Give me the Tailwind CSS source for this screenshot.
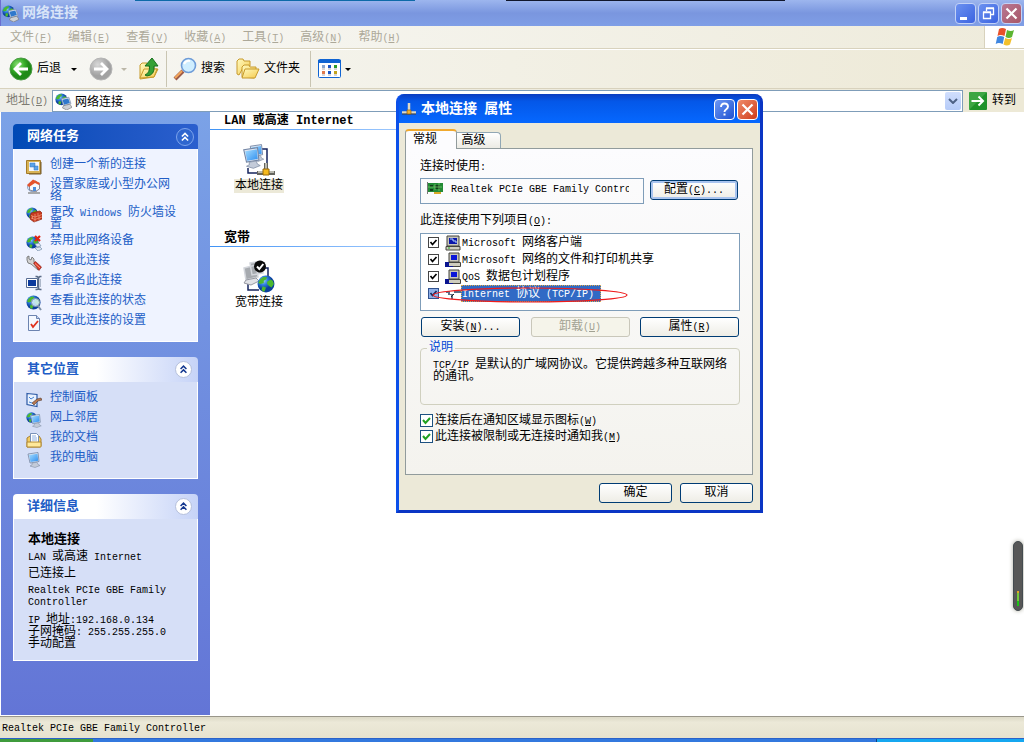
<!DOCTYPE html>
<html lang="zh-CN">
<head>
<meta charset="utf-8">
<title>网络连接</title>
<script src="https://cdn.jsdelivr.net/npm/@tailwindcss/browser@4"></script>
</head>
<body class="relative flex h-screen flex-col overflow-hidden bg-white font-['Liberation_Mono','Noto_Sans_CJK_SC',monospace] text-xs leading-3 text-black [&_span]:leading-none">

<svg class="absolute size-0" aria-hidden="true">
  <defs>
    <radialGradient id="gGlobe" cx="35%" cy="30%"><stop offset="0" stop-color="#9fd0ff"/><stop offset=".5" stop-color="#2f7fe0"/><stop offset="1" stop-color="#0a3f9c"/></radialGradient>
    <radialGradient id="gBack" cx="35%" cy="30%"><stop offset="0" stop-color="#8fe07a"/><stop offset=".6" stop-color="#3bb02c"/><stop offset="1" stop-color="#1f8a18"/></radialGradient>
    <radialGradient id="gFwd" cx="35%" cy="30%"><stop offset="0" stop-color="#d8d8d8"/><stop offset="1" stop-color="#a2a2a2"/></radialGradient>
    <linearGradient id="gFolder" x2="1" y2="1"><stop offset="0" stop-color="#fffbc0"/><stop offset="1" stop-color="#f5c94c"/></linearGradient>
    <linearGradient id="gScreen" x2="1" y2="1"><stop offset="0" stop-color="#a4dcff"/><stop offset="1" stop-color="#2f8ff0"/></linearGradient>
  </defs>
  <symbol id="globe" viewBox="0 0 16 16">
    <circle cx="8" cy="8" r="7.500" fill="url(#gGlobe)"/>
    <path d="M3 3.500l3-2 3 .5-1 2-2 1v2l-3 1-2-1zM9 6l3-2 2 1 1 3-2 3-2-1-2-2zM5 10l3 1-1 3-1 1-2-2z" fill="#4cb82e"/>
  </symbol>
  <symbol id="monitor" viewBox="0 0 16 16">
    <path d="M2 2l10-1.500 1 9L4 11z" fill="#dfe6f2" stroke="#7386a5" stroke-width=".8"/>
    <path d="M3 3l8.500-1.300 .7 7L4.500 10z" fill="url(#gScreen)"/>
    <path d="M6 11l5-.8 1 2.300 2 1-5 2-5-1.500 2-1z" fill="#c3cbd9" stroke="#8390a6" stroke-width=".6"/>
  </symbol>
  <symbol id="netconn" viewBox="0 0 16 16">
    <use href="#globe" width="12" height="12"/>
    <path d="M6 5.500l7-1.500 2 6-7 2z" fill="#e1e8f3" stroke="#8090ab" stroke-width=".7"/>
    <path d="M7 6.300l5.500-1.200 1.500 4.400-5.500 1.500z" fill="#2f78cc"/>
    <path d="M8 12l6-1.500 2 3-5 2.500-4-2z" fill="#ccd0d6" stroke="#777" stroke-width=".6"/>
  </symbol>
  <symbol id="wizard" viewBox="0 0 16 16">
    <path d="M.5 1.500h14v13H.5z" fill="#d8b356" stroke="#a47a28"/><path d="M3 3h10v9H3z" fill="#f4f7ff"/>
    <path d="M4 4h5v4H4zM8 7h4v4H8z" fill="#5aa3ea" stroke="#3674bd" stroke-width=".5"/><path d="M15 3v12H3" fill="none" stroke="#775c2a"/>
  </symbol>
  <symbol id="home" viewBox="0 0 16 16">
    <path d="M5 11h6v2h3v2H2v-2h3z" fill="#a7a9ac"/><circle cx="6" cy="8" r="4.500" fill="#d9e8fb" stroke="#90a8ca"/>
    <path d="M3.500 5.500v5.500l6 1.500 4-2.500V5l-4-3z" fill="#f7f8fc" stroke="#889"/>
    <path d="M1 6L7 .5 14 4l-1 2-4-2-6 4z" fill="#e4522d"/><path d="M7 8h3v4H7z" fill="#4c8cdb"/>
  </symbol>
  <symbol id="firewall" viewBox="0 0 16 16">
    <use href="#globe" width="12" height="12"/>
    <path d="M5 6l9-2 2 2v6l-8 3-4-3z" fill="#c83a1f" stroke="#8e2412" stroke-width=".7"/>
    <path d="M5 8.500l4 1.500 7-2.500M5 11l4 1.500 7-2.500M9 7v8M12 6v2.500M13 9v4M6.500 9v3" stroke="#f2a183" stroke-width=".7" fill="none"/>
  </symbol>
  <symbol id="disable" viewBox="0 0 16 16">
    <use href="#globe" width="13" height="13" y="1"/><path d="M9 9l4-1 2 3-4 1zM9 13l5-1 2 2-4 2z" fill="#dce6f3" stroke="#7890ac" stroke-width=".7"/>
    <path d="M9 1l5 5M14 1L9 6" stroke="#df2413" stroke-width="2.200"/>
  </symbol>
  <symbol id="repair" viewBox="0 0 16 16">
    <path d="M1 2l2-1v3l2 1 1-3 2 2v3l6 5-2 3-7-6-3-1-1-3z" fill="#d3d3d3" stroke="#686868" stroke-width=".8"/>
    <path d="M7.500 8l2-1.500 6 5.500-2.500 3.500z" fill="#dd3826" stroke="#7b1b13" stroke-width=".6"/><path d="M9 8.500l5 4.500" stroke="#ff9a83"/>
  </symbol>
  <symbol id="rename" viewBox="0 0 16 16">
    <path d="M.5 3.500h11v9H.5z" fill="#fff" stroke="#566b92"/><path d="M2 5h8v6H2z" fill="#0c3a9d"/>
    <path d="M9.500 1.500h1.500l1.500 1 1.500-1H15.500M9.500 14.500h1.500l1.500-1 1.500 1h1.500M12.500 2.500v11" fill="none" stroke="#5b6c87" stroke-width="1.600"/><path d="M14.500 4v8" stroke="#aeb9cb"/>
  </symbol>
  <symbol id="status" viewBox="0 0 16 16">
    <use href="#globe" width="15" height="15"/><circle cx="9.500" cy="7.500" r="4" fill="#d7f0ff" fill-opacity=".85" stroke="#8393a8"/>
    <path d="M12 11l3 4" stroke="#7e91a8" stroke-width="2"/>
  </symbol>
  <symbol id="settings" viewBox="0 0 16 16">
    <path d="M2.500.5h8l3 3v12h-11z" fill="#f4f8ff" stroke="#6c83b0"/><path d="M10.500.5v3h3" fill="#c4d3ef" stroke="#6c83b0"/>
    <path d="M5 9l2 3 5-6" fill="none" stroke="#e0321e" stroke-width="1.800"/>
  </symbol>
  <symbol id="control" viewBox="0 0 16 16">
    <path d="M1 1.500l10 1v12l-10-2z" fill="#e9f2ff" stroke="#2c59a5" stroke-width="1.200"/><path d="M3 5l2 2 3-2M3 10l3 1" stroke="#4482d2" fill="none"/>
    <path d="M6 11l5-4 4-1 1 2-4 1-4 4z" fill="#b87851" stroke="#51392e" stroke-width=".6"/>
  </symbol>
  <symbol id="places" viewBox="0 0 16 16"><use href="#globe" width="11" height="11"/><use href="#monitor" x="3" y="2" width="14" height="14"/></symbol>
  <symbol id="docs" viewBox="0 0 16 16">
    <path d="M1 6l3-2h9l2 3v7l-1 1H1z" fill="#f3cd62" stroke="#a9802f"/><path d="M4.500 1.500h6l2 2v7h-8z" fill="#fff" stroke="#7991b8"/>
    <path d="M6 4h4M6 6h5M6 8h5" stroke="#8eb0e3"/><path d="M1 10h14v5H1z" fill="#ffe99a" stroke="#b18933"/>
  </symbol>
  <symbol id="lan" viewBox="0 0 34 34">
    <path d="M20 6h5v15M6 25v5h11" fill="none" stroke="#16245e" stroke-width="1.500"/>
    <use href="#monitor" x="6" y="0" width="18" height="20"/><use href="#monitor" x="-1" y="4" width="22" height="22"/>
    <path d="M24 20v8M15 30h18" stroke="#65655e" stroke-width="4"/><path d="M24 20v8M16 29h16" stroke="#d5d5cb" stroke-width="1.500"/>
    <path d="M21 26h6v6h-6z" fill="#f5b91e" stroke="#98690a"/>
  </symbol>
  <symbol id="wan" viewBox="0 0 34 34">
    <path d="M23 8h3v10M6 24v6h11" fill="none" stroke="#16245e" stroke-width="1.500"/>
    <path d="M8 3l11-2 2 12-11 2zM2 8l12-3 2 12-12 3z" fill="#a6aaaf" stroke="#d3d6dc" stroke-width="1.500"/><path d="M4 20l10-2 3 3-8 4-7-2z" fill="#e1e2e6" stroke="#9799a2"/>
    <use href="#globe" x="15" y="15" width="18" height="18"/>
    <circle cx="18" cy="6.500" r="6" fill="#0a0a0a"/><path d="M15 6.500l2.300 2.500 4-5" fill="none" stroke="#fff" stroke-width="2"/>
  </symbol>
  <symbol id="plug" viewBox="0 0 16 16">
    <path d="M8 2v7M1 11.500h14" stroke="#ddd8c4" stroke-width="2.500"/><path d="M1 13h14" stroke="#433f36"/><path d="M6 9h4v4H6z" fill="#f8b32d" stroke="#875b16" stroke-width=".7"/>
  </symbol>
  <symbol id="pc" viewBox="0 0 16 16">
    <path d="M2 1h12v10H2z" fill="#c9c7bb" stroke="#44443e"/><path d="M4 3h8v6H4z" fill="#0b16aa"/><path d="M5 4h3v2h3v2" fill="none" stroke="#b5d4ff"/>
    <path d="M1 11.500h14v3.500H1z" fill="#cfcdbf" stroke="#44443e"/><path d="M3 13h2" stroke="#2a2"/>
  </symbol>
  <symbol id="pcshare" viewBox="0 0 16 16">
    <path d="M4 1h10v9H4z" fill="#c9c7bb" stroke="#44443e"/><path d="M6 3h6v5H6z" fill="#0b16d8"/><path d="M3.500 10.500h12v4h-12z" fill="#cfcdbf" stroke="#44443e"/>
    <path d="M0 10h4v5H0z" fill="#0a1490"/><path d="M4 14.500h4" stroke="#0a1490"/>
  </symbol>
  <symbol id="proto" viewBox="0 0 16 16"><path d="M1 5h4v3h3v5H6V9H3V7H1zM9 5h7v2H9z" fill="#5d6f87"/><path d="M6 11l3-3" stroke="#222"/></symbol>
  <symbol id="chev" viewBox="0 0 18 18"><path d="M5.500 8.500L9 5l3.500 3.500M5.500 13L9 9.500l3.500 3.500" fill="none" stroke="currentColor" stroke-width="1.800"/></symbol>
</svg>

<!-- Window title bar -->
<header class="flex h-[26px] shrink-0 items-center border-l border-[#6a6fd0] bg-linear-to-b from-[#9db6ee] via-[#7a96df] to-[#7f9ee6] pl-px pr-0.5">
  <svg class="size-[17px]"><use href="#netconn"/></svg>
  <h1 class="ml-[3px] flex-1 text-sm font-bold leading-4 text-[#d8e4f8]">网络连接</h1>
  <div class="flex gap-0.5">
    <button aria-label="最小化" class="grid size-[21px] place-items-center rounded-sm border border-[#c3d2f7] bg-linear-to-br from-[#6c91f0] to-[#3c62e0]"><svg class="size-[19px]" viewBox="0 0 19 19"><path d="M4 13h7v3H4z" fill="#fff"/></svg></button>
    <button aria-label="还原" class="grid size-[21px] place-items-center rounded-sm border border-[#c3d2f7] bg-linear-to-br from-[#6c91f0] to-[#3c62e0]"><svg class="size-[19px]" viewBox="0 0 19 19" fill="none" stroke="#fff"><path d="M4.500 8.500h7v6h-7zM4 8h8M7.500 7V4.500h7v6H12M7 4h8" stroke-width="1.300"/></svg></button>
    <button aria-label="关闭" class="grid size-[21px] place-items-center rounded-sm border border-[#c3d2f7] bg-linear-to-br from-[#b87894] to-[#a85668]"><svg class="size-[19px]" viewBox="0 0 19 19"><path d="M4.500 4.500l10 10M14.500 4.500l-10 10" stroke="#fff" stroke-width="2.200"/></svg></button>
  </div>
</header>
<div class="absolute left-[135px] top-0 h-px w-[280px] bg-[#0d6aa8]"></div>
<div class="absolute left-[506px] top-0 h-px w-[279px] bg-[#10162c]"></div>

<!-- Menu bar -->
<nav class="flex h-[23px] shrink-0 border-b border-[#d8d2bd] bg-linear-to-r from-[#f8f8f6] to-[#eeebdb]">
  <div class="flex flex-1 items-center gap-4 pl-2.5 pt-0.5 text-[#aca899]">
    <button>文件<span class="text-[10px]">(<u>F</u>)</span></button>
    <button>编辑<span class="text-[10px]">(<u>E</u>)</span></button>
    <button>查看<span class="text-[10px]">(<u>V</u>)</span></button>
    <button>收藏<span class="text-[10px]">(<u>A</u>)</span></button>
    <button>工具<span class="text-[10px]">(<u>T</u>)</span></button>
    <button>高级<span class="text-[10px]">(<u>N</u>)</span></button>
    <button>帮助<span class="text-[10px]">(<u>H</u>)</span></button>
  </div>
  <div class="grid w-10 place-items-center border-l border-[#d8d2bd] bg-white">
    <svg class="size-5" viewBox="0 0 20 20"><path d="M4 2q3-2 7 0l-1.500 7q-4-2-7 0z" fill="#e8512a"/><path d="M12 3q4 2 7 0l-2 7q-3 2-6.500 0z" fill="#5cb531"/><path d="M2.200 10q3-2 7 0l-1.500 7q-4-2-7 0z" fill="#3f86e0"/><path d="M10.200 11q4 2 6.800 0l-2 6.500q-3 2-6.500 0z" fill="#f3c02c"/></svg>
  </div>
</nav>

<!-- Toolbar -->
<div class="flex h-[40px] shrink-0 items-center border-b border-[#d8d2bd] border-t border-t-white bg-linear-to-r from-[#f7f7f4] to-[#ede9d6] pl-[9px]">
  <button class="flex items-center gap-1"><svg class="size-6" viewBox="0 0 24 24"><circle cx="12" cy="12" r="11" fill="url(#gBack)" stroke="#4b9a45"/><path d="M19 12H7M12 6l-6 6 6 6" fill="none" stroke="#fff" stroke-width="2.800"/></svg>后退</button>
  <button aria-label="后退列表" class="ml-2.5 w-1.5"><svg class="h-[3px] w-1.5" viewBox="0 0 6 3"><path d="M0 0h6L3 3z"/></svg></button>
  <button aria-label="前进" class="ml-3"><svg class="size-6" viewBox="0 0 24 24"><circle cx="12" cy="12" r="11" fill="url(#gFwd)" stroke="#b5b5b5"/><path d="M5 12h12M12 6l6 6-6 6" fill="none" stroke="#fff" stroke-width="2.800"/></svg></button>
  <button aria-label="前进列表" class="ml-2 w-1.5"><svg class="h-[3px] w-1.5" viewBox="0 0 6 3"><path d="M0 0h6L3 3z" fill="#bbb7a8"/></svg></button>
  <button aria-label="向上" class="ml-3"><svg class="h-6 w-5" viewBox="0 0 20 24"><path d="M1 8l2-2h5l1 3h6v3h4l-4 8-14 2z" fill="url(#gFolder)" stroke="#c79a2c"/><path d="M1 21l4-9h13l-3 8z" fill="url(#gFolder)" stroke="#c79a2c"/><path d="M6 18q5-2 4.500-9H6l7-8 6 8h-4q1 9-7 10z" fill="#36a136" stroke="#17701d"/></svg></button>
  <div class="ml-[7px] h-9 w-px bg-[#c9c5b2]"></div>
  <button class="ml-1.5 flex items-center gap-1"><svg class="size-6" viewBox="0 0 24 24"><path d="M2 22l8-8" stroke="#9b5a4a" stroke-width="4"/><path d="M2 21l7-7" stroke="#f3a65b" stroke-width="2"/><circle cx="15.500" cy="8.500" r="7" fill="#cfeeff" stroke="#6e9cd8" stroke-width="1.600"/><path d="M11 7q2-4 6-3" stroke="#fff" stroke-width="2" fill="none"/></svg>搜索</button>
  <button class="ml-[11px] flex items-center gap-1"><svg class="size-6" viewBox="0 0 24 24"><path d="M1 4l2-2h4l1 2h6v5H8l-5 9-2-1z" fill="url(#gFolder)" stroke="#c79a2c"/><path d="M6 10l2-2h5l1 2h6v3l-2 8-12-1z" fill="url(#gFolder)" stroke="#c79a2c"/><path d="M6 21l3-9h14l-4 9z" fill="url(#gFolder)" stroke="#c79a2c"/></svg>文件夹</button>
  <div class="ml-2.5 h-9 w-px bg-[#c9c5b2]"></div>
  <button aria-label="查看" class="ml-[7px] flex items-center gap-[3px]"><svg class="h-5 w-6" viewBox="0 0 24 20"><rect x=".5" y=".5" width="22" height="18" rx="1" fill="#fff" stroke="#1064d2"/><path d="M0 1h23v3H0z" fill="#1064d2"/><path d="M4 6h3v3H4z" fill="#89a6cf"/><path d="M10 6h3v3h-3z" fill="#1d56c3"/><path d="M16 6h3v3h-3z" fill="#2b9b2b"/><path d="M4 12h3v3H4z" fill="#e07a4b"/><path d="M10 12h3v3h-3z" fill="#1d56c3"/><path d="M16 12h3v3h-3z" fill="#c2a21c"/><path d="M4 10h3m3 0h3m3 0h3M4 16h3m3 0h3m3 0h3" stroke="#999" stroke-width=".8"/></svg><svg class="h-[3px] w-1.5" viewBox="0 0 6 3"><path d="M0 0h6L3 3z"/></svg></button>
</div>

<!-- Address bar -->
<div class="flex h-[23px] shrink-0 items-center bg-linear-to-r from-[#efeee8] to-[#ede9d6] pl-1.5 pt-px">
  <label for="addr" class="w-[46px] text-[#7d7b72]">地址<span class="text-[10px]">(<u>D</u>)</span></label>
  <div class="flex h-[22px] flex-1 items-center border border-[#7f9db9] bg-white pl-0.5 pr-px">
    <svg class="size-[17px]"><use href="#netconn"/></svg>
    <input id="addr" value="网络连接" class="ml-[3px] h-4 min-w-0 flex-1 bg-transparent outline-none">
    <button aria-label="展开地址" class="grid h-[18px] w-4 place-items-center rounded-xs bg-linear-to-b from-[#d0defd] to-[#b5cbf8]"><svg class="h-1.5 w-2.5" viewBox="0 0 10 6"><path d="M1 1l4 4 4-4" fill="none" stroke="#4d6185" stroke-width="2"/></svg></button>
  </div>
  <button class="ml-1.5 mr-2 flex items-center gap-[5px]"><svg class="size-[18px]" viewBox="0 0 18 18"><rect width="18" height="18" rx="1" fill="#1f9229"/><path d="M0 0h18L0 18z" fill="#5cba5d" opacity=".5"/><path d="M2.500 9H14M9.500 4.500L14 9l-4.500 4.500" fill="none" stroke="#fff" stroke-width="2"/></svg>转到</button>
</div>

<div class="flex min-h-0 flex-1 border-l border-white">
  <!-- Task pane -->
  <aside class="w-[209px] shrink-0 space-y-[15px] bg-linear-to-b from-[#7ba2e7] to-[#6375d6] px-3 pt-3">
    <section>
      <h2 class="flex h-[25px] items-center justify-between rounded-t-sm bg-linear-to-r from-[#0049b5] to-[#2b5fce] pl-3.5 pr-1 text-[13px] font-bold text-white">网络任务
        <button aria-label="折叠" class="size-[18px] rounded-full border border-[#7da4ec] bg-[#2f66cf]"><svg class="size-4" viewBox="0 0 18 18"><use href="#chev"/></svg></button></h2>
      <ul class="space-y-1 border border-t-0 border-white bg-[#eff3ff] px-3 py-2.5 text-[#215dc6]">
        <li class="flex min-h-4 gap-2"><svg class="size-4 shrink-0"><use href="#wizard"/></svg><a href="#" class="w-32">创建一个新的连接</a></li>
        <li class="flex min-h-4 gap-2"><svg class="size-4 shrink-0"><use href="#home"/></svg><a href="#" class="w-32">设置家庭或小型办公网络</a></li>
        <li class="flex min-h-4 gap-2"><svg class="size-4 shrink-0"><use href="#firewall"/></svg><a href="#" class="w-32">更改<span class="text-[10px]"> Windows </span>防火墙设置</a></li>
        <li class="flex min-h-4 gap-2"><svg class="size-4 shrink-0"><use href="#disable"/></svg><a href="#" class="w-32">禁用此网络设备</a></li>
        <li class="flex min-h-4 gap-2"><svg class="size-4 shrink-0"><use href="#repair"/></svg><a href="#" class="w-32">修复此连接</a></li>
        <li class="flex min-h-4 gap-2"><svg class="size-4 shrink-0"><use href="#rename"/></svg><a href="#" class="w-32">重命名此连接</a></li>
        <li class="flex min-h-4 gap-2"><svg class="size-4 shrink-0"><use href="#status"/></svg><a href="#" class="w-32">查看此连接的状态</a></li>
        <li class="flex min-h-4 gap-2"><svg class="size-4 shrink-0"><use href="#settings"/></svg><a href="#" class="w-32">更改此连接的设置</a></li>
      </ul>
    </section>
    <section>
      <h2 class="flex h-[25px] items-center justify-between rounded-t-sm bg-linear-to-r from-white from-45% to-[#c6d3f7] pl-3.5 pr-1.5 text-[13px] font-bold text-[#215dc6]">其它位置
        <button aria-label="折叠" class="size-[17px] rounded-full border border-[#b5c0dc] bg-white text-[#14388f]"><svg class="size-[15px]" viewBox="0 0 18 18"><use href="#chev"/></svg></button></h2>
      <ul class="space-y-1 border border-t-0 border-white bg-[#d6dff7] px-3 py-2.5 text-[#215dc6]">
        <li class="flex min-h-4 gap-2"><svg class="size-4 shrink-0"><use href="#control"/></svg><a href="#">控制面板</a></li>
        <li class="flex min-h-4 gap-2"><svg class="size-4 shrink-0"><use href="#places"/></svg><a href="#">网上邻居</a></li>
        <li class="flex min-h-4 gap-2"><svg class="size-4 shrink-0"><use href="#docs"/></svg><a href="#">我的文档</a></li>
        <li class="flex min-h-4 gap-2"><svg class="size-4 shrink-0"><use href="#monitor"/></svg><a href="#">我的电脑</a></li>
      </ul>
    </section>
    <section>
      <h2 class="flex h-[25px] items-center justify-between rounded-t-sm bg-linear-to-r from-white from-45% to-[#c6d3f7] pl-3.5 pr-1.5 text-[13px] font-bold text-[#215dc6]">详细信息
        <button aria-label="折叠" class="size-[17px] rounded-full border border-[#b5c0dc] bg-white text-[#14388f]"><svg class="size-[15px]" viewBox="0 0 18 18"><use href="#chev"/></svg></button></h2>
      <div class="space-y-[5px] border border-t-0 border-white bg-[#d6dff7] px-3.5 pb-2.5 pt-[15px]">
        <p class="text-[13px] font-bold leading-3">本地连接</p>
        <p><span class="text-[10px]">LAN </span>或高速<span class="text-[10px]"> Internet</span></p>
        <p>已连接上</p>
        <p class="text-[10px] leading-3">Realtek PCIe GBE Family Controller</p>
        <p><span class="text-[10px]">IP </span>地址<span class="text-[10px]">:192.168.0.134</span><br>子网掩码<span class="text-[10px]">: 255.255.255.0</span><br>手动配置</p>
      </div>
    </section>
  </aside>

  <!-- Connection list -->
  <main class="flex-1">
    <section class="h-[117px]">
      <h2 class="flex h-[17px] items-center pl-3.5 font-bold"><span class="whitespace-pre">LAN 或高速 Internet</span></h2>
      <div class="h-px w-[400px] bg-linear-to-r from-[#3f93f5] to-white"></div>
      <button class="ml-6 mt-[13px] flex w-[50px] flex-col items-center gap-0.5"><svg class="size-[34px]"><use href="#lan"/></svg><span class="bg-[#ece9d8] px-px py-px">本地连接</span></button>
    </section>
    <section>
      <h2 class="flex h-[17px] items-center pl-3.5 text-[13px] font-bold">宽带</h2>
      <div class="h-px w-[400px] bg-linear-to-r from-[#3f93f5] to-white"></div>
      <button class="ml-6 mt-[13px] flex w-[50px] flex-col items-center gap-0.5"><svg class="size-[34px]"><use href="#wan"/></svg><span class="px-px py-px">宽带连接</span></button>
    </section>
  </main>
</div>

<!-- Status bar and taskbar edge -->
<footer class="mt-px shrink-0">
  <div class="flex h-[22px] items-center border-t border-[#99968a] bg-linear-to-b from-[#dedbc9] from-5% via-[#ece9d8] via-25% to-[#e6e2cf] pl-0.5 pt-0.5 text-[10px]">Realtek PCIe GBE Family Controller</div>
  <div class="flex h-1 border-t border-[#2a62c9]"><div class="w-[93px] bg-[#3f9b3c]"></div><div class="flex-1 bg-[#3278de]"></div><div class="w-[148px] border-l border-[#123f7c] bg-[#15a7f0]"></div></div>
</footer>

<!-- Floating meter -->
<div class="absolute right-px top-[541px] flex h-[70px] w-2.5 flex-col items-center justify-end rounded-full border border-[#444b50] bg-[#575757] pb-1 shadow-[0_0_4px_#a9a99a]"><span class="h-0.5 w-0.5 bg-[#e2a623]"></span><span class="h-2 w-0.5 bg-[#74c83a]"></span><span class="h-[5px] w-0.5 bg-[#1cc015]"></span></div>

<!-- Properties dialog -->
<div role="dialog" aria-labelledby="dlgTitle" class="absolute left-[396px] top-[94px] flex w-[367px] flex-col rounded-t-lg border-3 border-t-0 border-b-[#0a35c4] border-l-[#0b50ea] border-r-[#0a35c4] bg-[#0848dc]">
  <div class="flex h-[29px] items-center rounded-t-md bg-linear-to-b from-[#0a3cc0] via-[#0457e8] via-25% to-[#0668ff] px-0.5">
    <svg class="size-4"><use href="#plug"/></svg>
    <h2 id="dlgTitle" class="ml-1 flex-1 text-sm font-bold leading-4 text-white">本地连接<span class="text-xs"> </span>属性</h2>
    <div class="flex gap-0.5 pt-0.5">
      <button aria-label="帮助" class="size-[21px] rounded-sm border border-white bg-linear-to-br from-[#6d98f4] to-[#1f4fd0]"><svg class="size-[19px]" viewBox="0 0 19 19"><path d="M6 7q0-3.500 3.500-3.500T13 6.500q0 1.500-2 3-1.500 1-1.500 2.500" fill="none" stroke="#fff" stroke-width="1.900"/><path d="M8.500 13.500h2v2h-2z" fill="#fff"/></svg></button>
      <button aria-label="关闭" class="size-[21px] rounded-sm border border-white bg-linear-to-br from-[#ee8a68] to-[#cf3a15]"><svg class="size-[19px]" viewBox="0 0 19 19"><path d="M4.500 4.500l10 10M14.500 4.500l-10 10" stroke="#fff" stroke-width="2.200"/></svg></button>
    </div>
  </div>

  <div class="bg-[#ece9d8] py-[7px] pl-1.5 pr-[7px]">
    <div role="tablist" class="-mb-px -mt-px flex items-end">
      <button role="tab" aria-selected="true" class="h-5 w-[52px] rounded-t-sm border border-b-0 border-t-2 border-[#919b9c] border-t-[#f0a92e] bg-[#fcfcfe] pr-3">常规</button>
      <button role="tab" class="mb-px h-4 w-11 rounded-tr-sm border border-b-0 border-l-0 border-[#91a7b4] bg-linear-to-b from-white to-[#ecebe4] pr-2.5">高级</button>
    </div>
    <div class="border border-[#919b9c] bg-linear-to-b from-[#fcfcfe] to-[#f4f3ee] pb-[31px] pl-3.5 pr-[11px] pt-3">
      <label for="adapter">连接时使用<span class="text-[10px]">:</span></label>
      <div class="mt-[5px] flex items-start gap-1.5">
        <div class="flex h-[26px] w-56 items-start border border-[#7f9db9] pl-1.5 pt-[3px]">
          <svg class="h-3.5 w-4 shrink-0" viewBox="0 0 16 14"><path d="M1 1h15v9H1z" fill="#238a35"/><path d="M3 3h3v2H3zM8 3h5v4H8zM3 7h3v2H3z" fill="#123f1a"/><path d="M8 2v6M1 5h14M12 1v8" stroke="#7bd070" stroke-width=".7"/><path d="M7 10h7v2H7z" fill="#d8a928"/><path d="M0 0v12" stroke="#777" stroke-width="2"/></svg>
          <input id="adapter" readonly value="Realtek PCIe GBE Family Controller" class="ml-2 h-3.5 w-[178px] bg-transparent text-[10px] leading-3 outline-none">
        </div>
        <button class="mt-0.5 h-5 w-[88px] rounded-[3px] border border-[#003c74] bg-linear-to-b from-white to-[#eeede6] shadow-[inset_0_0_0_2px_#a9c4ef]">配置<span class="text-[10px]">(<u>C</u>)...</span></button>
      </div>
      <p id="itemsLabel" class="mt-[11px]">此连接使用下列项目<span class="text-[10px]">(<u>O</u>):</span></p>
      <div aria-labelledby="itemsLabel" role="group" class="relative mt-1.5 h-[78px] w-80 border border-[#7f9db9] bg-white pl-[7px]">
        <label class="flex h-[17px] items-center"><span class="grid size-[11px]"><input type="checkbox" checked class="size-[11px] appearance-none border border-[#444] bg-white [grid-area:1/1]"><svg class="pointer-events-none size-[11px] [grid-area:1/1]" viewBox="0 0 11 11"><path d="M2.500 5l2 2.500L8.500 3" fill="none" stroke="#000" stroke-width="1.700"/></svg></span><svg class="ml-1.5 size-4"><use href="#pc"/></svg><span class="ml-px"><span class="text-[10px]">Microsoft </span>网络客户端</span></label>
        <label class="flex h-[17px] items-center"><span class="grid size-[11px]"><input type="checkbox" checked class="size-[11px] appearance-none border border-[#444] bg-white [grid-area:1/1]"><svg class="pointer-events-none size-[11px] [grid-area:1/1]" viewBox="0 0 11 11"><path d="M2.500 5l2 2.500L8.500 3" fill="none" stroke="#000" stroke-width="1.700"/></svg></span><svg class="ml-1.5 size-4"><use href="#pcshare"/></svg><span class="ml-px"><span class="text-[10px]">Microsoft </span>网络的文件和打印机共享</span></label>
        <label class="flex h-[17px] items-center"><span class="grid size-[11px]"><input type="checkbox" checked class="size-[11px] appearance-none border border-[#444] bg-white [grid-area:1/1]"><svg class="pointer-events-none size-[11px] [grid-area:1/1]" viewBox="0 0 11 11"><path d="M2.500 5l2 2.500L8.500 3" fill="none" stroke="#000" stroke-width="1.700"/></svg></span><svg class="ml-1.5 size-4"><use href="#pcshare"/></svg><span class="ml-px"><span class="text-[10px]">QoS </span>数据包计划程序</span></label>
        <label class="flex h-[17px] items-center"><span class="grid size-[11px]"><input type="checkbox" checked class="size-[11px] appearance-none border border-[#31528f] bg-[#8fb0e8] [grid-area:1/1]"><svg class="pointer-events-none size-[11px] [grid-area:1/1]" viewBox="0 0 11 11"><path d="M2.500 5l2 2.500L8.500 3" fill="none" stroke="#102c60" stroke-width="1.700"/></svg></span><svg class="ml-1.5 size-4"><use href="#proto"/></svg><span class="flex h-[17px] w-[140px] items-center border border-dotted border-[#e0a94a] bg-[#316ac5] text-white"><span><span class="text-[10px]">Internet </span>协议<span class="text-[10px]"> (TCP/IP)</span></span></span></label>
        <svg class="pointer-events-none absolute left-[11px] top-[53px] h-4 w-[196px]" viewBox="0 0 196 16"><ellipse cx="98" cy="8" rx="97" ry="7" fill="none" stroke="#ee1c1c" stroke-width="1.200"/></svg>
      </div>
      <div class="mt-1.5 flex w-80 justify-between px-px">
        <button class="h-5 w-[99px] rounded-[3px] border border-[#003c74] bg-linear-to-b from-white to-[#eeede6]">安装<span class="text-[10px]">(<u>N</u>)...</span></button>
        <button disabled class="h-5 w-[99px] rounded-[3px] border border-[#c9c7ba] bg-[#f5f4ea] text-[#a1a192]">卸载<span class="text-[10px]">(<u>U</u>)</span></button>
        <button class="h-5 w-[99px] rounded-[3px] border border-[#003c74] bg-linear-to-b from-white to-[#eeede6]">属性<span class="text-[10px]">(<u>R</u>)</span></button>
      </div>
      <fieldset class="mt-[5px] h-[63px] w-80 rounded-sm border border-[#d0d0bf] pl-3">
        <legend class="-ml-1.5 px-0.5 text-[#0046d5]">说明</legend>
        <p class="mt-[5px] w-[300px]"><span class="text-[10px]">TCP/IP </span>是默认的广域网协议。它提供跨越多种互联网络的通讯。</p>
      </fieldset>
      <div class="mt-[9px] space-y-[3px]">
        <label class="flex items-center gap-0.5"><span class="grid size-[13px]"><input type="checkbox" checked class="size-[13px] appearance-none border border-[#1c5180] bg-white [grid-area:1/1]"><svg class="pointer-events-none size-[13px] [grid-area:1/1]" viewBox="0 0 13 13"><path d="M3 6l2.500 3L10 4" fill="none" stroke="#21a121" stroke-width="2"/></svg></span><span>连接后在通知区域显示图标<span class="text-[10px]">(<u>W</u>)</span></span></label>
        <label class="flex items-center gap-0.5"><span class="grid size-[13px]"><input type="checkbox" checked class="size-[13px] appearance-none border border-[#1c5180] bg-white [grid-area:1/1]"><svg class="pointer-events-none size-[13px] [grid-area:1/1]" viewBox="0 0 13 13"><path d="M3 6l2.500 3L10 4" fill="none" stroke="#21a121" stroke-width="2"/></svg></span><span>此连接被限制或无连接时通知我<span class="text-[10px]">(<u>M</u>)</span></span></label>
      </div>
    </div>
    <div class="mt-2 flex justify-end gap-2">
      <button class="h-5 w-[73px] rounded-[3px] border border-[#003c74] bg-linear-to-b from-white to-[#eeede6]">确定</button>
      <button class="h-5 w-[73px] rounded-[3px] border border-[#003c74] bg-linear-to-b from-white to-[#eeede6]">取消</button>
    </div>
  </div>
</div>
</body>
</html>
